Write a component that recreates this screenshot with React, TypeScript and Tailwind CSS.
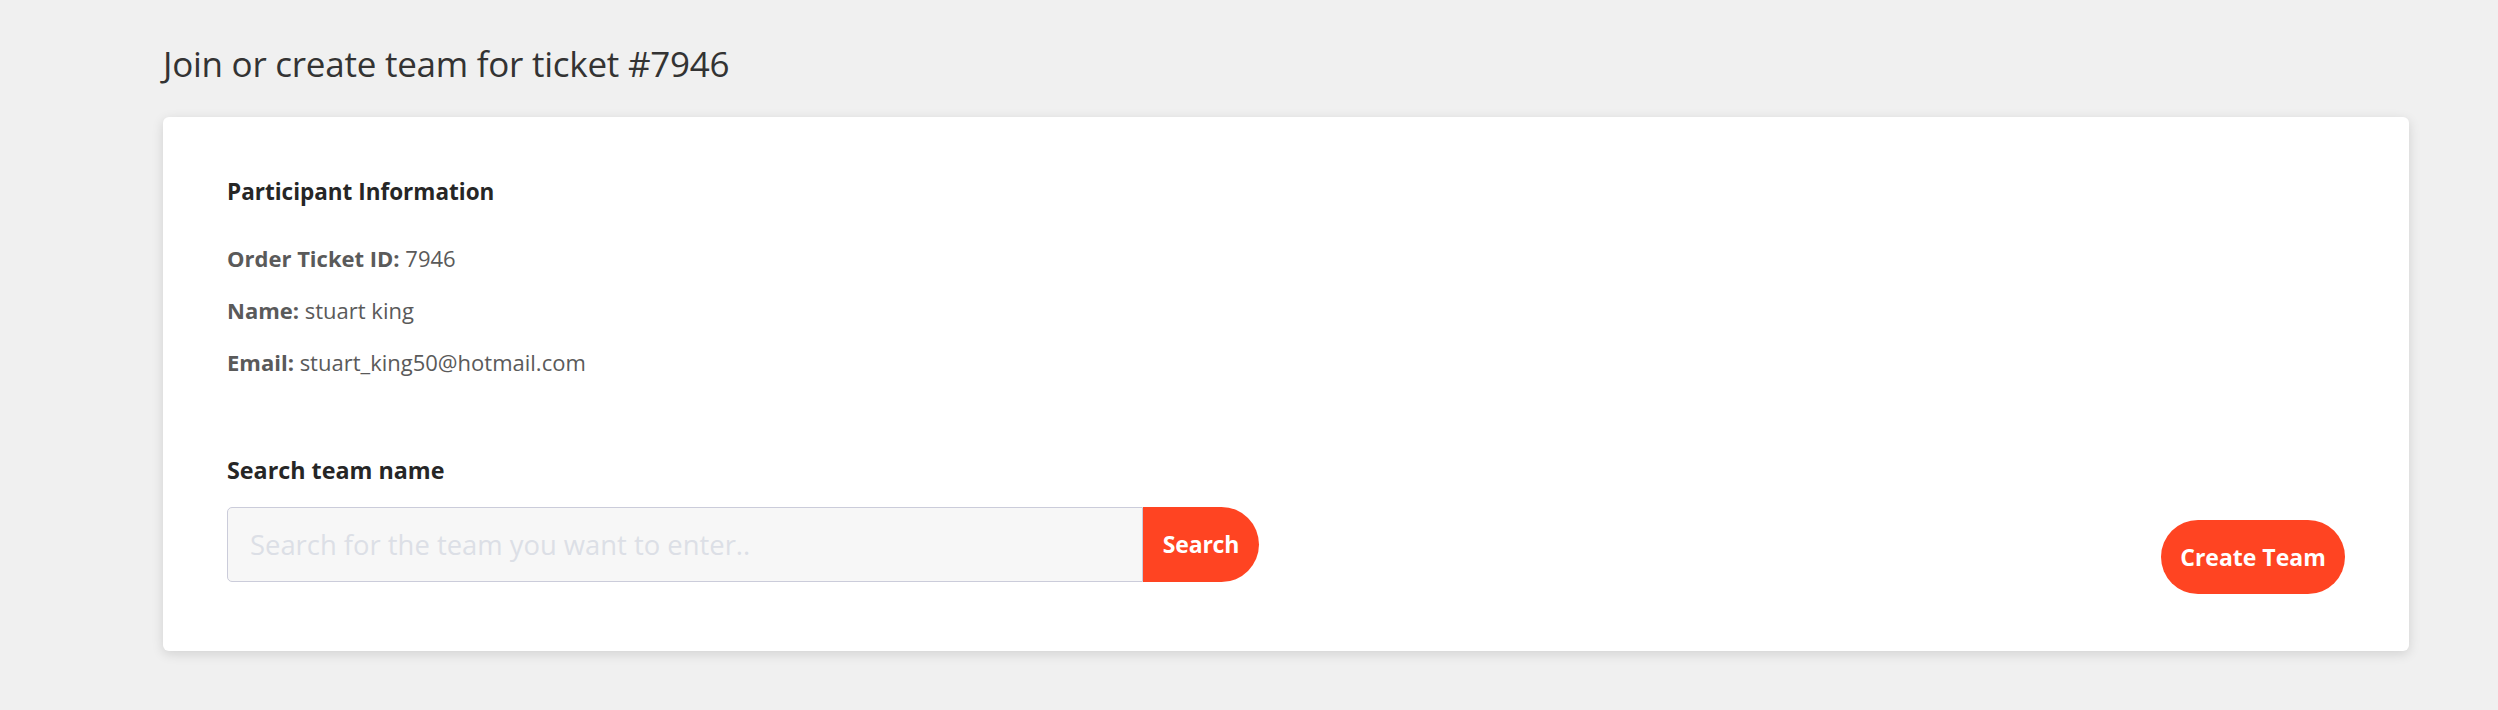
import React, { useState } from 'react';

export default function App() {
  const [query, setQuery] = useState('');

  return (
    <div className="min-h-screen bg-[#f0f0f0] font-['Open_Sans',sans-serif] text-[#333]">
      <div className="pl-[163px] pt-[40px] w-[2409px]">
        <h1 className="text-[35px] leading-[48px] font-normal text-[#333] tracking-[-0.25px]">
          Join or create team for ticket #7946
        </h1>

        <div className="mt-[29px] bg-white rounded-[6px] shadow-[0_3px_12px_rgba(0,0,0,0.13)] px-[64px] pt-[59px] pb-[69px]">
          <h2 className="text-[22.5px] leading-[32px] font-bold text-[#262626]">
            Participant Information
          </h2>

          <div className="mt-[34px] flex flex-col gap-[20px] text-[22px] leading-[32px] text-[#5a5a5a]">
            <p><span className="font-bold">Order Ticket ID:</span> 7946</p>
            <p><span className="font-bold">Name:</span> stuart king</p>
            <p><span className="font-bold">Email:</span> stuart_king50@hotmail.com</p>
          </div>

          <div className="mt-[76px] flex items-end justify-between">
            <div>
              <label className="block text-[23.3px] leading-[32px] font-bold text-[#262626]">
                Search team name
              </label>
              <div className="mt-[21px] flex">
                <input
                  value={query}
                  onChange={(e) => setQuery(e.target.value)}
                  placeholder="Search for the team you want to enter.."
                  className="w-[916px] h-[75px] bg-[#f7f7f7] border border-[#cbccda] rounded-l-[5px] px-[22px] text-[27.4px] text-[#555] placeholder:text-[#dcdfe6] outline-none"
                />
                <button className="w-[116px] h-[75px] bg-[#ff4422] rounded-r-full text-white text-[23px] font-bold tracking-[-0.2px]">
                  Search
                </button>
              </div>
            </div>

            <button className="mb-[-12px] w-[184px] h-[74px] bg-[#ff4422] rounded-full text-white text-[23px] font-bold">
              Create Team
            </button>
          </div>
        </div>
      </div>
    </div>
  );
}
